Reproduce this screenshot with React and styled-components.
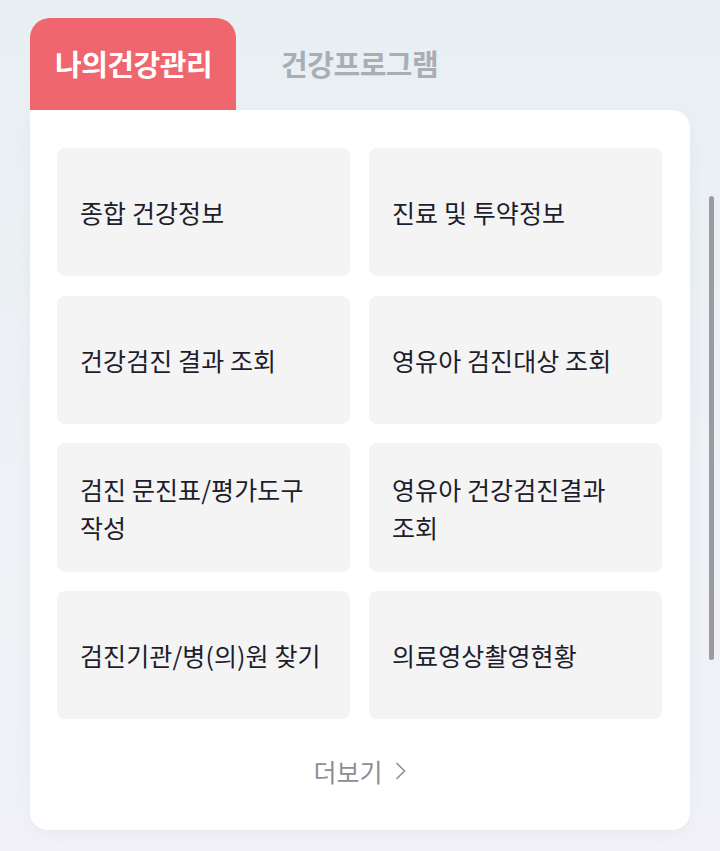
import React, { useState } from 'react';
import styled, { createGlobalStyle } from 'styled-components';

const GlobalStyle = createGlobalStyle`
  html, body {
    margin: 0;
    padding: 0;
  }
  body {
    font-family: "Noto Sans CJK KR", "Noto Sans", sans-serif;
    background: linear-gradient(180deg, #e8eff2 0%, #eef1f5 55%, #f1f1f7 100%);
    min-height: 851px;
  }
`;

const Page = styled.div`
  position: relative;
  padding: 18px 30px 21px;
  height: 851px;
  box-sizing: border-box;
`;

const Tabs = styled.div`
  display: flex;
  align-items: stretch;
  gap: 20px;
  height: 92px;
`;

const Tab = styled.button`
  border: 0;
  margin: 0;
  padding: 0 24px 2px 25px;
  font-family: inherit;
  font-size: 29px;
  font-weight: 700;
  letter-spacing: -0.5px;
  cursor: pointer;
  border-radius: 20px 20px 0 0;
  background: ${(p) => (p.active ? '#f0666e' : 'transparent')};
  color: ${(p) => (p.active ? '#ffffff' : '#a9aeb6')};
`;

const Card = styled.div`
  background: #fff;
  border-radius: 0 18px 18px 18px;
  box-shadow: 0 4px 16px rgba(120, 120, 160, 0.06);
  padding: 38px 28px 0 27px;
  height: 720px;
  box-sizing: border-box;
`;

const Grid = styled.div`
  display: grid;
  grid-template-columns: 293px 293px;
  grid-auto-rows: 128.3px;
  column-gap: 19px;
  row-gap: 19.4px;
`;

const Item = styled.a`
  display: flex;
  align-items: center;
  padding: 0 12px 0 23px;
  background: #f4f4f5;
  border-radius: 8px;
  font-size: 25px;
  line-height: 38px;
  letter-spacing: 0.1px;
  word-break: keep-all;
  color: #1d1d2c;
  text-decoration: none;
  cursor: pointer;
`;

const More = styled.button`
  display: flex;
  align-items: center;
  gap: 12px;
  margin: 34px auto 0;
  border: 0;
  background: none;
  padding: 0;
  font-family: inherit;
  font-size: 25px;
  color: #8e8e92;
  cursor: pointer;
`;

const Scrollbar = styled.div`
  position: absolute;
  left: 709px;
  top: 196px;
  width: 5px;
  height: 464px;
  border-radius: 3px;
  background: #9b9b9f;
`;

const menus = [
  '종합 건강정보',
  '진료 및 투약정보',
  '건강검진 결과 조회',
  '영유아 검진대상 조회',
  '검진 문진표/평가도구 작성',
  '영유아 건강검진결과 조회',
  '검진기관/병(의)원 찾기',
  '의료영상촬영현황',
];

export default function App() {
  const [tab, setTab] = useState(0);

  return (
    <>
      <GlobalStyle />
      <Page>
        <Tabs>
          <Tab active={tab === 0} onClick={() => setTab(0)}>나의건강관리</Tab>
          <Tab active={tab === 1} onClick={() => setTab(1)}>건강프로그램</Tab>
        </Tabs>
        <Card>
          <Grid>
            {menus.map((m) => (
              <Item key={m}>{m}</Item>
            ))}
          </Grid>
          <More>
            더보기
            <svg width="11" height="20" viewBox="0 0 11 20" fill="none">
              <path d="M1.5 2 L9.5 10 L1.5 18" stroke="#8e8e92" strokeWidth="1.6" />
            </svg>
          </More>
        </Card>
        <Scrollbar />
      </Page>
    </>
  );
}
